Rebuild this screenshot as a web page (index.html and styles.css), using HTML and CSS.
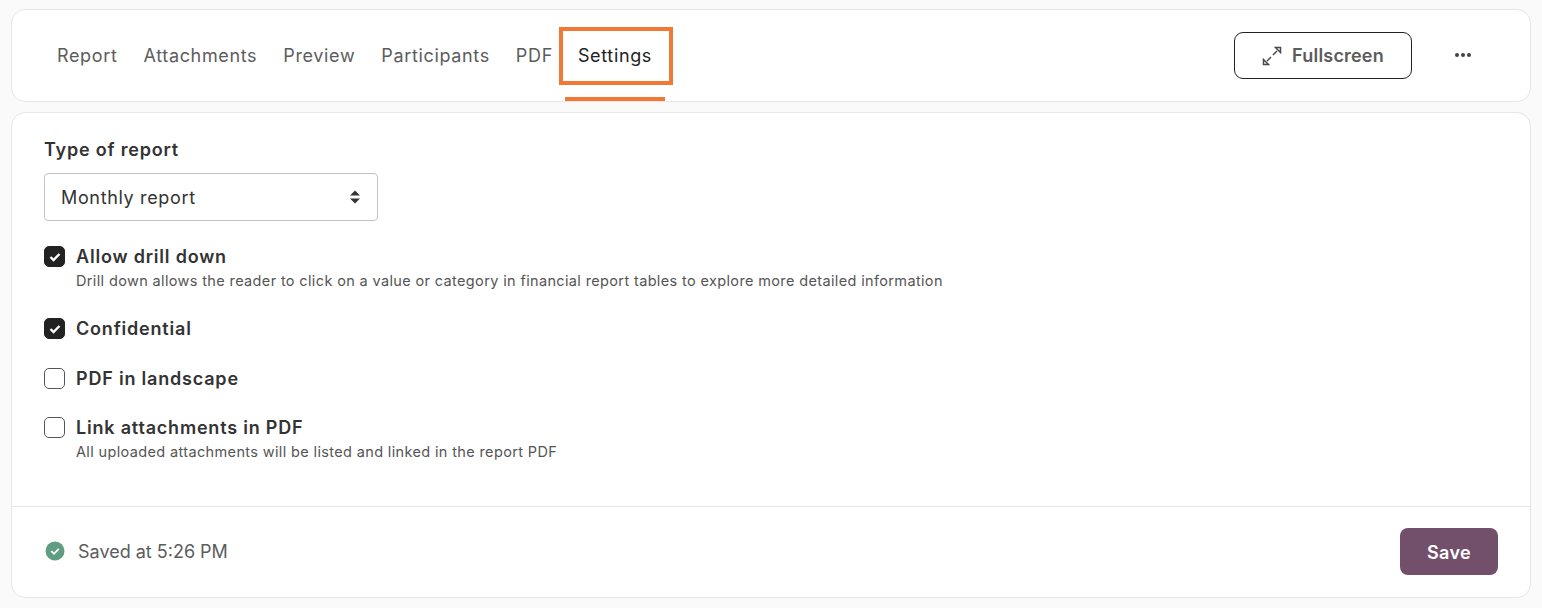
FILE: index.html
```html
<!DOCTYPE html>
<html lang="en">
<head>
<meta charset="utf-8">
<title>Settings</title>
<link rel="stylesheet" href="styles.css">
</head>
<body>
<header class="card topbar">
  <nav class="tabs">
    <a class="tab">Report</a>
    <a class="tab">Attachments</a>
    <a class="tab">Preview</a>
    <a class="tab">Participants</a>
    <a class="tab">PDF</a>
    <a class="tab active">Settings<span class="highlight"></span></a>
  </nav>
  <div class="actions">
    <button class="fullscreen">
      <svg class="fs-icon" width="20" height="20" viewBox="0 0 20 20" fill="none" stroke="#4a4a4a" stroke-width="1.5">
        <path d="M11 9 L15 5 M13.5 1.5 H18.5 V6.5 Z"/>
        <path d="M9 11 L5 15 M1.5 13.5 V18.5 H6.5 Z"/>
      </svg>
      <span>Fullscreen</span>
    </button>
    <span class="more"><i></i><i></i><i></i></span>
  </div>
</header>
<main class="card panel">
  <section class="form">
    <label class="field-label">Type of report</label>
    <div class="select">
      <span>Monthly report</span>
      <svg width="12" height="16" viewBox="0 0 12 16" fill="#333"><path d="M6 1.5 L11 6.5 H1 Z"/><path d="M6 14.5 L11 9.5 H1 Z"/></svg>
    </div>
    <div class="check-row tall">
      <span class="box on"><svg width="12" height="10" viewBox="0 0 12 10" fill="none" stroke="#fff" stroke-width="2.4"><path d="M1.5 5 L4.5 8 L10.5 2"/></svg></span>
      <div><div class="check-title">Allow drill down</div><div class="check-help">Drill down allows the reader to click on a value or category in financial report tables to explore more detailed information</div></div>
    </div>
    <div class="check-row short">
      <span class="box on"><svg width="12" height="10" viewBox="0 0 12 10" fill="none" stroke="#fff" stroke-width="2.4"><path d="M1.5 5 L4.5 8 L10.5 2"/></svg></span>
      <div><div class="check-title">Confidential</div></div>
    </div>
    <div class="check-row short tight">
      <span class="box"></span>
      <div><div class="check-title">PDF in landscape</div></div>
    </div>
    <div class="check-row">
      <span class="box"></span>
      <div><div class="check-title">Link attachments in PDF</div><div class="check-help">All uploaded attachments will be listed and linked in the report PDF</div></div>
    </div>
  </section>
  <footer class="footer">
    <div class="status">
      <svg width="20" height="20" viewBox="0 0 20 20"><circle cx="10" cy="10" r="9.5" fill="#5f9e80"/><path d="M6.3 10.2 L9 12.8 L13.8 7.8" fill="none" stroke="#fff" stroke-width="1.8"/></svg>
      <span>Saved at 5:26 PM</span>
    </div>
    <button class="save">Save</button>
  </footer>
</main>
</body>
</html>
```
FILE: styles.css
```css
* { box-sizing: border-box; }
html, body { height: 100%; }
body {
  margin: 0;
  padding: 9px 11px 0;
  background: #fafafa;
  font-family: "Inter", "Liberation Sans", sans-serif;
  color: #333;
  overflow: hidden;
}
.card {
  background: #fff;
  border: 1px solid #e6e6e6;
  border-radius: 14px;
  width: 1520px;
}
.topbar {
  height: 93px;
  display: flex;
  justify-content: space-between;
  align-items: center;
  padding: 0 59px 0 32px;
}
.tabs { display: flex; height: 100%; }
.tab {
  position: relative;
  display: flex;
  align-items: center;
  padding: 0 13px;
  font-size: 18px;
  letter-spacing: .65px;
  color: #5c5c5c;
}
.tab.active { color: #222; margin-left: -1px; }
.tab.active::after {
  content: "";
  position: absolute;
  left: 0;
  right: 0;
  bottom: 0;
  height: 4px;
  background: #f07a35;
}
.highlight {
  position: absolute;
  left: -6px;
  right: -8px;
  top: 17px;
  height: 58px;
  border: 4px solid #f07a35;
}
.actions { display: flex; align-items: center; gap: 43px; }
.fullscreen {
  width: 178px;
  height: 47px;
  display: flex;
  align-items: center;
  justify-content: center;
  gap: 10px;
  background: #fff;
  border: 1px solid #222;
  border-radius: 9px;
  font: 600 18px "Inter", sans-serif;
  letter-spacing: .2px;
  color: #5c5c5c;
}
.more { display: flex; gap: 2px; margin-bottom: 2px; }
.more i { width: 4px; height: 4px; border-radius: 50%; background: #444; }
.panel {
  margin-top: 10px;
  height: 486px;
  display: flex;
  flex-direction: column;
}
.form { flex: 1; padding: 25px 32px 0; }
.field-label { display: block; font-size: 18px; font-weight: 600; line-height: 24px; letter-spacing: .8px; }
.select {
  margin-top: 11px;
  width: 334px;
  height: 48px;
  border: 1px solid #c4c4c4;
  border-radius: 4px;
  display: flex;
  align-items: center;
  justify-content: space-between;
  padding: 0 16px;
  font-size: 18px;
  letter-spacing: .65px;
}
.check-row { display: flex; gap: 11px; align-items: flex-start; }
.check-row.tall { margin-top: 24px; margin-bottom: 26px; }
.check-row.short { margin-bottom: 26px; }
.check-row.tight { margin-bottom: 25px; }
.box {
  flex: none;
  width: 21px;
  height: 21px;
  margin-top: 1px;
  border: 1px solid #555;
  border-radius: 5px;
  display: flex;
  align-items: center;
  justify-content: center;
  background: #fff;
}
.box.on { background: #222; border-color: #222; }
.check-title { font-size: 18px; font-weight: 600; line-height: 24px; letter-spacing: .8px; }
.check-help { margin-top: 1px; font-size: 14.5px; line-height: 21px; color: #555; letter-spacing: .36px; }
.footer {
  height: 91px;
  border-top: 1px solid #e6e6e6;
  display: flex;
  align-items: center;
  justify-content: space-between;
  padding: 0 32px 2px 33px;
}
.status { display: flex; align-items: center; gap: 13px; font-size: 18px; color: #5c5c5c; }
.save {
  width: 98px;
  height: 47px;
  border: 0;
  border-radius: 8px;
  padding: 2px 0 0;
  background: #72506b;
  color: #fff;
  font: 600 18px "Inter", sans-serif;
  letter-spacing: .3px;
}
```
